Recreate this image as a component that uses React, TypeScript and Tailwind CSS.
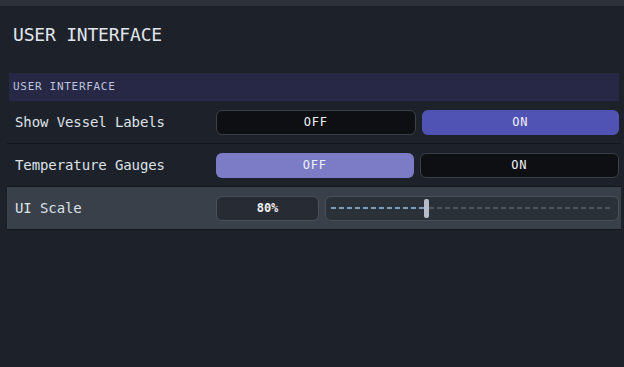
const mono = { fontFamily: '"DejaVu Sans Mono", "Liberation Mono", monospace' };

type ToggleProps = { value: boolean; offTone?: 'light' };

const Toggle = ({ value, offTone }: ToggleProps) => {
    const base = 'flex-1 h-[25px] rounded-[6px] flex items-center justify-center text-[12px] text-[#f1f2f6] tracking-[0.8px]';
    const idle = 'bg-[#0d0f13] border border-[#3a3f48]';
    return (
        <div className="flex gap-[6px] w-full">
            <button className={`${base} ${!value ? (offTone === 'light' ? 'bg-[#7b7bc6]' : 'bg-[#5053b3]') : idle}`}>OFF</button>
            <button className={`${base} ${value ? 'bg-[#5053b3]' : idle}`}>ON</button>
        </div>
    );
};

const Row = ({ label, children, highlight }: { label: string; children: React.ReactNode; highlight?: boolean }) => (
    <div
        className={`flex items-center h-[43px] pl-2 pr-[2px] border-b border-[#13161b] ${highlight ? 'bg-[#39404a]' : ''}`}
    >
        <div className="w-[201px] text-[14px] tracking-[-0.1px] text-[#dde1e8]">{label}</div>
        <div className="flex-1">{children}</div>
    </div>
);

export default function App() {
    const scale = 80;
    return (
        <div className="w-full h-[367px] bg-[#1d222a] border-t-[6px] border-[#2c313a] overflow-hidden" style={mono}>
            <div className="pl-[13px] pt-[15px] h-[67px] text-[18px] tracking-[-0.2px] text-[#e2e5ec]">USER INTERFACE</div>
            <div className="pl-[7px] pr-[3px]">
                <div className="mx-[2px] h-[28px] bg-[#262846] flex items-center pl-[4px] text-[11px] tracking-[0.7px] text-[#bfc3dc]">
                    USER INTERFACE
                </div>
                <Row label="Show Vessel Labels">
                    <Toggle value={true} />
                </Row>
                <Row label="Temperature Gauges">
                    <Toggle value={false} offTone="light" />
                </Row>
                <Row label="UI Scale" highlight>
                    <div className="flex gap-[6px] w-full">
                        <div className="w-[103px] h-[25px] rounded-[6px] bg-[#272c34] border border-[#4a505a] flex items-center justify-center text-[12px] font-bold text-[#f1f2f6]">
                            {scale}%
                        </div>
                        <div className="flex-1 h-[25px] rounded-[6px] bg-[#2b3139] border border-[#4a505a] flex items-center px-[5px]">
                            <div className="w-[93px] h-[2px] bg-[repeating-linear-gradient(90deg,#7c9abb_0_5px,transparent_5px_8px)]" />
                            <div className="w-[5px] h-[19px] rounded-[2px] bg-[#b8bbca]" />
                            <div className="flex-1 h-[2px] bg-[repeating-linear-gradient(90deg,#4d545f_0_5px,transparent_5px_8px)]" />
                        </div>
                    </div>
                </Row>
            </div>
        </div>
    );
}
